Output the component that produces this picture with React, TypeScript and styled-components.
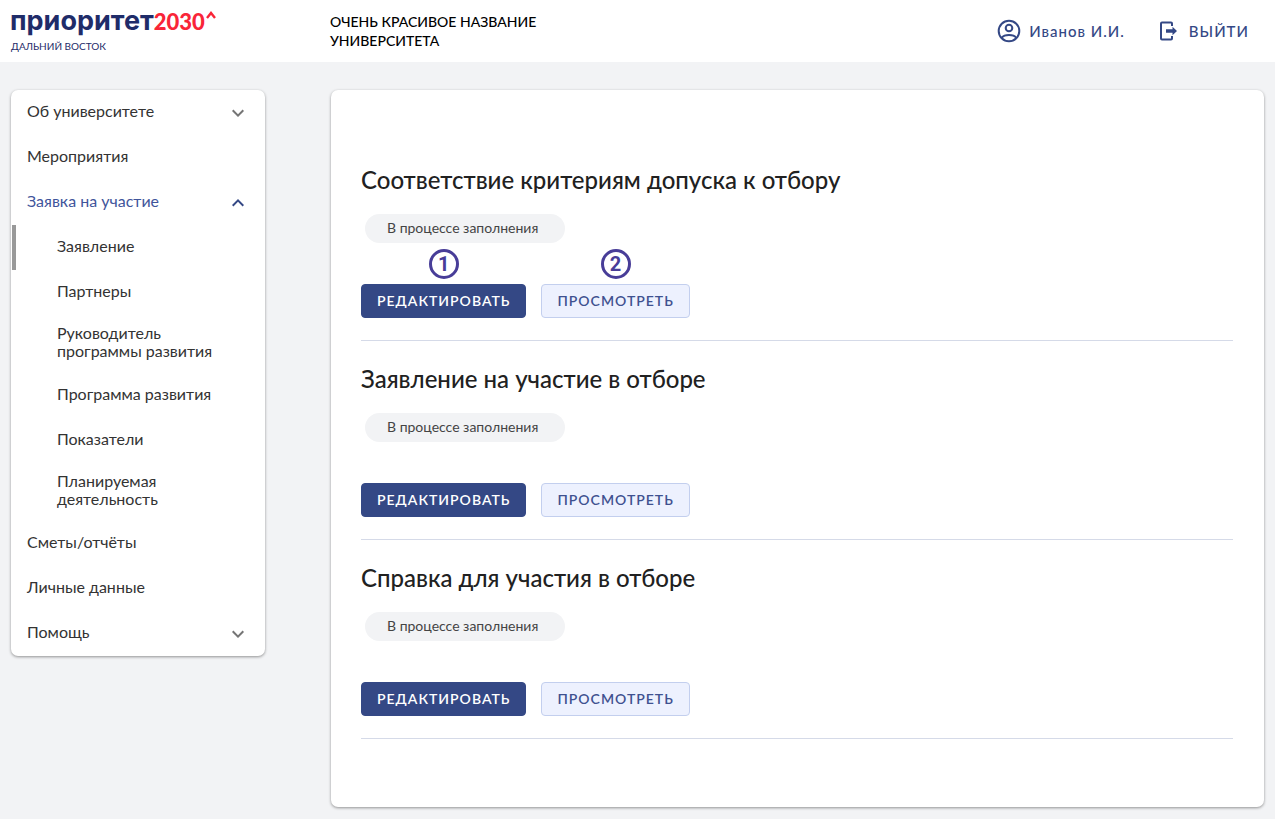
import React from "react";
import styled, { createGlobalStyle, css } from "styled-components";

const GlobalStyle = createGlobalStyle`
  *, *::before, *::after { box-sizing: border-box; }
  body {
    margin: 0;
    background: #f2f3f5;
    color: #333;
    font-family: Lato, "Open Sans", sans-serif;
  }
  button { font: inherit; }
`;

const Header = styled.header`
  display: grid;
  grid-template-columns: 254px 1fr auto;
  column-gap: 66px;
  align-items: center;
  height: 62px;
  padding: 0 26px 0 10px;
  background: #fff;
`;

const Brand = styled.a`
  display: flex;
  flex-direction: column;
  padding-bottom: 4px;
  color: #1f2c69;
  text-decoration: none;
`;

const BrandName = styled.span`
  display: flex;
  align-items: baseline;
  font-family: Inter, sans-serif;
  font-size: 27px;
  font-weight: 700;
  line-height: 32px;
`;

const BrandYear = styled.span`
  color: #f92538;
  font-family: Lato, sans-serif;
  font-size: 22px;
  font-weight: 900;
`;

const BrandMark = styled.svg`
  align-self: flex-start;
  width: 10px;
  height: 8px;
  margin: 6px 0 0 1px;
`;

const BrandRegion = styled.span`
  margin-left: 1px;
  font-size: 10px;
  line-height: 16px;
`;

const University = styled.p`
  max-width: 240px;
  margin: 0;
  padding-bottom: 1px;
  color: #000;
  font-size: 14px;
  font-weight: 500;
  line-height: 19px;
`;

const Account = styled.nav`
  display: flex;
  gap: 32px;
`;

const AccountLink = styled.a`
  display: flex;
  align-items: center;
  gap: 8px;
  color: #344885;
  font-size: 15px;
  font-weight: 500;
  letter-spacing: 1px;
  line-height: 24px;
  text-decoration: none;

  svg { width: 24px; height: 24px; }
`;

const Page = styled.div`
  display: grid;
  grid-template-columns: 254px minmax(0, 1fr);
  column-gap: 66px;
  align-items: start;
  padding: 28px 11px 12px;
`;

const card = css`
  border-radius: 7px;
  background: #fff;
  box-shadow: 0 1px 3px rgba(0, 0, 0, 0.4);
`;

const Sidebar = styled.nav`
  ${card}
`;

const NavList = styled.ul`
  margin: 0;
  padding: 0;
  list-style: none;
`;

const SubList = styled(NavList)`
  padding-left: 1px;
`;

const navRow = css`
  display: flex;
  align-items: center;
  justify-content: space-between;
  width: 100%;
  min-height: 45px;
  padding: 0 15px 3px 16px;
  font-size: 16px;
  line-height: 18px;
  text-align: left;
`;

const NavLink = styled.a<{ $nested?: boolean; $current?: boolean }>`
  ${navRow}
  color: #333;
  text-decoration: none;
  ${(p) =>
    p.$nested &&
    css`
      padding: 9px 40px 13px 41px;
      border-left: 4px solid ${p.$current ? "#999" : "transparent"};
    `}
`;

const NavToggle = styled.button<{ $open?: boolean }>`
  ${navRow}
  border: 0;
  background: none;
  color: ${(p) => (p.$open ? "#3f559b" : "#333")};
  cursor: pointer;

  svg {
    width: 24px;
    height: 24px;
    margin-top: 3px;
    fill: ${(p) => (p.$open ? "#344885" : "#757575")};
  }
`;

const Content = styled.main`
  ${card}
  padding: 52px 31px 68px 30px;
`;

const Stage = styled.section`
  display: flex;
  flex-direction: column;
  align-items: flex-start;
  padding: 22px 0;
  border-bottom: 1px solid #d5dae8;
`;

const StageTitle = styled.h2`
  margin: 0;
  color: #212121;
  font-size: 24px;
  font-weight: 500;
  line-height: 32px;
`;

const Status = styled.span`
  min-width: 200px;
  margin: 18px 0 41px 4px;
  padding: 0 22px 1px;
  border-radius: 15px;
  background: #f2f3f5;
  color: #444;
  font-size: 14px;
  line-height: 28px;
`;

const Actions = styled.div`
  display: flex;
  gap: 15px;
`;

const ActionButton = styled.button<{ $primary?: boolean }>`
  position: relative;
  height: 34px;
  padding: 0 15px;
  border: 1px solid ${(p) => (p.$primary ? "#344885" : "#c3cfee")};
  border-radius: 4px;
  background: ${(p) => (p.$primary ? "#344885" : "#edf1fe")};
  color: ${(p) => (p.$primary ? "#fff" : "#3f5190")};
  font-size: 14px;
  font-weight: 600;
  letter-spacing: 1px;
  line-height: 20px;
  cursor: pointer;
`;

const Callout = styled.span`
  position: absolute;
  bottom: 38px;
  left: 50%;
  width: 30px;
  height: 30px;
  border: 3px solid #483d98;
  border-radius: 50%;
  color: #483d98;
  font-family: Roboto, sans-serif;
  font-size: 20px;
  font-weight: 700;
  letter-spacing: 0;
  line-height: 24px;
  text-align: center;
  transform: translateX(-50%);
`;

const Chevron = ({ up }: { up?: boolean }) => (
  <svg viewBox="0 0 24 24" aria-hidden="true">
    <path
      d={
        up
          ? "m12 8-6 6 1.41 1.41L12 10.83l4.59 4.58L18 14z"
          : "M16.59 8.59 12 13.17 7.41 8.59 6 10l6 6 6-6z"
      }
    />
  </svg>
);

const UserIcon = () => (
  <svg viewBox="0 0 24 24" fill="none" stroke="currentColor" strokeWidth="2" aria-hidden="true">
    <circle cx="12" cy="12" r="10.3" />
    <circle cx="12" cy="9" r="3.3" />
    <path d="M4.8 18.8C6.2 16.8 9 16 12 16s5.8.8 7.2 2.8" />
  </svg>
);

const ExitIcon = () => (
  <svg viewBox="0 0 24 24" fill="none" stroke="currentColor" strokeWidth="2" aria-hidden="true">
    <path d="M15 7V4.500a1 1 0 0 0-1-1H5a1 1 0 0 0-1 1v15a1 1 0 0 0 1 1h9a1 1 0 0 0 1-1V17" />
    <path d="M9 10.300h6.500V7.800l4.500 4.200-4.500 4.200v-2.500H9z" fill="currentColor" stroke="none" />
  </svg>
);

type NavItem = { label: string; open?: boolean; expandable?: boolean; children?: string[] };

const navigation: NavItem[] = [
  { label: "Об университете", expandable: true },
  { label: "Мероприятия" },
  {
    label: "Заявка на участие",
    expandable: true,
    open: true,
    children: [
      "Заявление",
      "Партнеры",
      "Руководитель программы развития",
      "Программа развития",
      "Показатели",
      "Планируемая деятельность",
    ],
  },
  { label: "Сметы/отчёты" },
  { label: "Личные данные" },
  { label: "Помощь", expandable: true },
];

const stages = [
  { title: "Соответствие критериям допуска к отбору", callouts: true },
  { title: "Заявление на участие в отборе" },
  { title: "Справка для участия в отборе" },
];

export default function App() {
  return (
    <>
      <GlobalStyle />
      <Header>
        <Brand href="#">
          <BrandName>
            приоритет<BrandYear>2030</BrandYear>
            <BrandMark viewBox="0 0 10 8" aria-hidden="true">
              <path d="M1 7 5 2l4 5" fill="none" stroke="#f92538" strokeWidth="2.400" />
            </BrandMark>
          </BrandName>
          <BrandRegion>ДАЛЬНИЙ ВОСТОК</BrandRegion>
        </Brand>
        <University>ОЧЕНЬ КРАСИВОЕ НАЗВАНИЕ УНИВЕРСИТЕТА</University>
        <Account>
          <AccountLink href="#profile">
            <UserIcon />
            Иванов И.И.
          </AccountLink>
          <AccountLink href="#logout">
            <ExitIcon />
            ВЫЙТИ
          </AccountLink>
        </Account>
      </Header>
      <Page>
        <Sidebar>
          <NavList>
            {navigation.map((item) => (
              <li key={item.label}>
                {item.expandable ? (
                  <NavToggle type="button" $open={item.open} aria-expanded={!!item.open}>
                    {item.label}
                    <Chevron up={item.open} />
                  </NavToggle>
                ) : (
                  <NavLink href="#">{item.label}</NavLink>
                )}
                {item.children && (
                  <SubList>
                    {item.children.map((child, i) => (
                      <li key={child}>
                        <NavLink href="#" $nested $current={i === 0}>
                          {child}
                        </NavLink>
                      </li>
                    ))}
                  </SubList>
                )}
              </li>
            ))}
          </NavList>
        </Sidebar>
        <Content>
          {stages.map((stage) => (
            <Stage key={stage.title}>
              <StageTitle>{stage.title}</StageTitle>
              <Status>В процессе заполнения</Status>
              <Actions>
                <ActionButton type="button" $primary>
                  РЕДАКТИРОВАТЬ
                  {stage.callouts && <Callout>1</Callout>}
                </ActionButton>
                <ActionButton type="button">
                  ПРОСМОТРЕТЬ
                  {stage.callouts && <Callout>2</Callout>}
                </ActionButton>
              </Actions>
            </Stage>
          ))}
        </Content>
      </Page>
    </>
  );
}
